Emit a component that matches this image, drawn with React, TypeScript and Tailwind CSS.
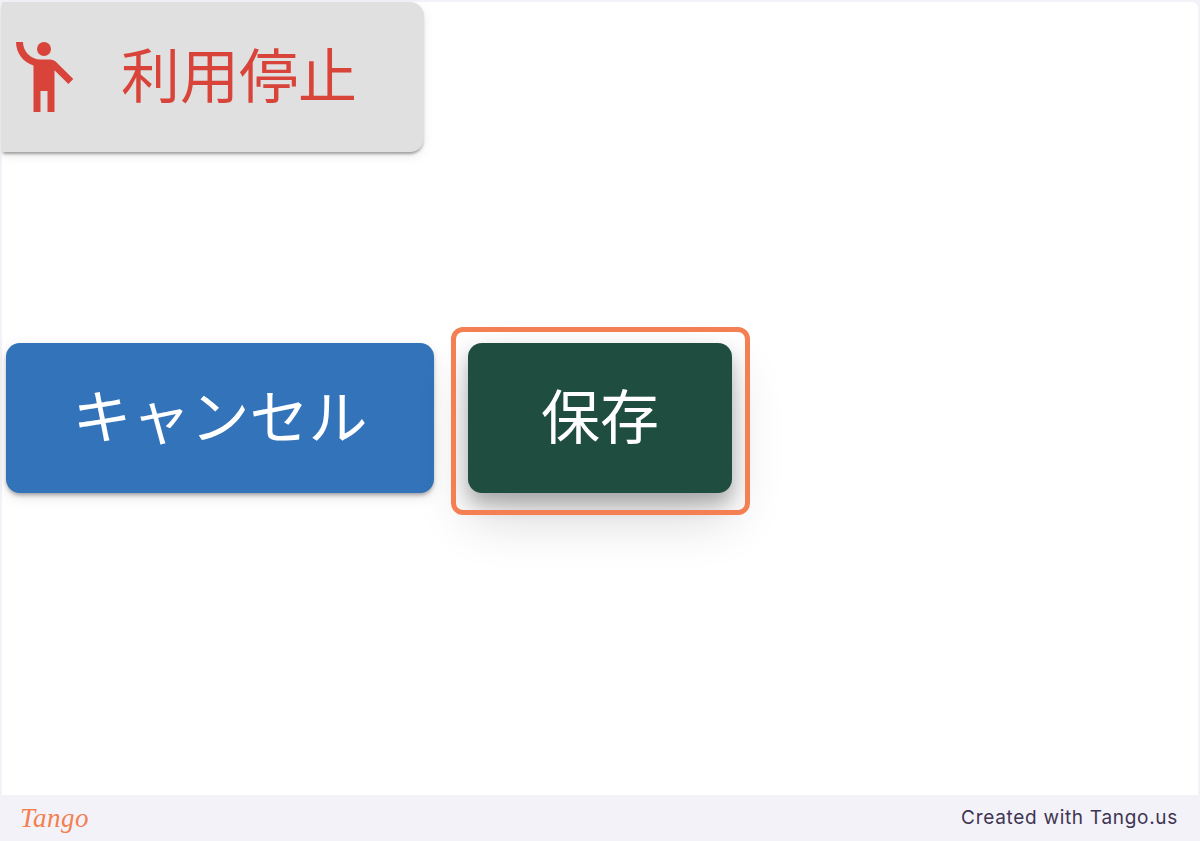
import React from 'react';
import { MdEmojiPeople } from 'react-icons/md';

const cjk = "font-['Noto_Sans_CJK_JP','Noto_Sans',sans-serif]";

export default function App() {
    return (
        <div className="flex flex-col h-[841px] bg-[#f3f2f8] overflow-hidden">
            <main className="flex-1 mt-[2px] mx-[2px] bg-white rounded-t-md">
                <button className={`flex items-center w-[422px] h-[150px] bg-[#e0e0e0] rounded-r-[14px] text-[#d9443a] text-[59px] ${cjk} shadow-[0_3px_3px_-1px_rgba(0,0,0,0.35),0_4px_12px_rgba(0,0,0,0.08)]`}>
                    <MdEmojiPeople size={84} className="shrink-0" />
                    <span className="ml-[35px] pb-[10px] leading-none">利用停止</span>
                </button>

                <div className={`flex items-start gap-[34px] mt-[191px] pl-[4px] text-white text-[59px] ${cjk}`}>
                    <button className="w-[428px] h-[150px] pb-[10px] bg-[#3273b9] rounded-[14px] leading-none shadow-[0_3px_4px_-1px_rgba(0,0,0,0.35),0_4px_14px_rgba(0,0,0,0.1)]">
                        キャンセル
                    </button>
                    <div className="relative">
                        <button className="block w-[264px] h-[150px] pb-[10px] bg-[#1f4d3f] rounded-[14px] leading-none shadow-[0_10px_18px_rgba(0,0,0,0.25),0_26px_52px_rgba(0,0,0,0.16)]">
                            保存
                        </button>
                        <div className="absolute left-[-17px] top-[-16px] w-[299px] h-[188px] border-[5px] border-[#f47f52] rounded-[12px]" />
                    </div>
                </div>
            </main>

            <footer className="flex items-center justify-between h-[46px] pl-[20px] pr-[22px] bg-[#f3f2f8]">
                <span className="font-['Liberation_Serif',serif] italic text-[27px] leading-none text-[#f47f52] tracking-[0.5px]">Tango</span>
                <span className="font-['Inter',sans-serif] text-[19px] tracking-[0.7px] text-[#3e3553]">Created with Tango.us</span>
            </footer>
        </div>
    );
}
